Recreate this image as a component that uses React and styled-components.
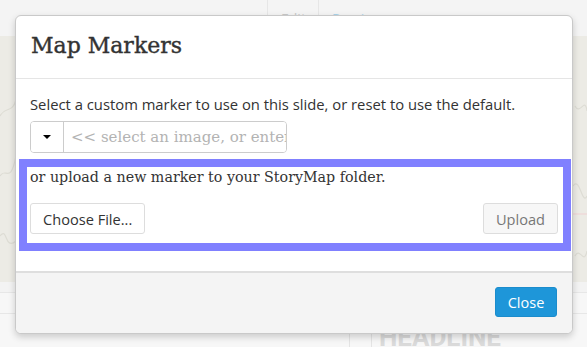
import React from "react";
import styled, { createGlobalStyle } from "styled-components";

const Global = createGlobalStyle`
  html, body { margin: 0; padding: 0; }
  body { font-family: "Open Sans", "Liberation Sans", sans-serif; }
`

const Page = styled.div`
  position: relative;
  width: 587px;
  height: 347px;
  overflow: hidden;
  background: #f6f6f6;
  display: flex;
  flex-direction: column;
`

const TopBar = styled.div`
  height: 36px;
  flex: none;
  display: flex;
  align-items: flex-start;
  padding-left: 267px;
  background: #f4f4f4;
`

const Tab = styled.div`
  height: 36px;
  padding: 9px 12px 0 13px;
  box-sizing: border-box;
  border-left: 1px solid #e6e6e6;
  font-size: 14px;
  color: ${(p) => (p.active ? "#a9d3ea" : "#c8c8c8")};
`

const MapArea = styled.div`
  height: 246px;
  flex: none;
  background: #ecebe5;
  overflow: hidden;
`

const Rows = styled.div`
  flex: 1;
  display: flex;
  flex-direction: column;
  background: #f7f7f7;
`

const Row = styled.div`
  height: ${(p) => p.h}px;
  flex: none;
  border-bottom: 1px solid #e7e7e7;
  background: ${(p) => p.bg || "#f7f7f7"};
`

const HeadlineRow = styled.div`
  flex: 1;
  display: flex;
  padding-left: 349px;
`

const Rule = styled.div`
  width: 21px;
  border-left: 1px solid #e4e4e4;
  flex: none;
`

const Headline = styled.div`
  border-left: 1px solid #e4e4e4;
  padding: 10px 0 0 7px;
  font-family: "Liberation Sans Narrow", "Roboto", sans-serif;
  font-weight: 700;
  font-size: 26px;
  line-height: 26px;
  color: #dadada;
`

const Modal = styled.div`
  position: absolute;
  left: 15px;
  top: 15px;
  width: 558px;
  height: 319px;
  box-sizing: border-box;
  background: #fff;
  border: 1px solid #c9c9c9;
  border-radius: 6px;
  box-shadow: 0 3px 7px rgba(0, 0, 0, 0.18);
  display: flex;
  flex-direction: column;
  overflow: hidden;
`

const Header = styled.div`
  height: 63px;
  flex: none;
  box-sizing: border-box;
  border-bottom: 1px solid #e5e5e5;
  padding: 15px 15px 0 15px;
`

const Title = styled.h3`
  margin: 0;
  font-family: "DejaVu Serif", "Liberation Serif", serif;
  font-weight: 400;
  font-size: 22px;
  line-height: 30px;
  color: #333;
  -webkit-text-stroke: 0.4px #333;
`

const Body = styled.div`
  flex: 1;
  padding: 15px 14px 0 14px;
`

const Lead = styled.p`
  margin: 0;
  font-size: 14.8px;
  line-height: 20px;
  color: #333;
`

const InputGroup = styled.div`
  margin-top: 7px;
  width: 257px;
  height: 32px;
  box-sizing: border-box;
  display: flex;
  border: 1px solid #ccc;
  border-radius: 4px;
  overflow: hidden;
`

const DropBtn = styled.div`
  width: 32px;
  flex: none;
  display: flex;
  align-items: center;
  justify-content: center;
  border-right: 1px solid #ccc;
  background: #fff;
`

const Caret = styled.span`
  width: 0;
  height: 0;
  border-left: 4px solid transparent;
  border-right: 4px solid transparent;
  border-top: 4px solid #000;
`

const TextInput = styled.input`
  flex: 1;
  min-width: 0;
  border: 0;
  outline: 0;
  padding: 0 0 0 7px;
  font-family: "DejaVu Serif", "Liberation Serif", serif;
  font-size: 15px;
  color: #333;
  &::placeholder { color: #b3b3b3; }
`

const Highlight = styled.div`
  margin: 6px -13px 0 -11px;
  border: 8px solid #8080ff;
  padding: 0 5px 9px 3px;
  background: #fff;
`

const UploadText = styled.p`
  margin: 0;
  font-family: "DejaVu Serif", "Liberation Serif", serif;
  font-size: 14.25px;
  line-height: 20px;
  color: #333;
`

const ButtonRow = styled.div`
  margin-top: 16px;
  display: flex;
  justify-content: space-between;
`

const Button = styled.button`
  height: 31px;
  padding: 0 12px;
  border: 1px solid #ddd;
  border-radius: 3px;
  background: ${(p) => (p.muted ? "#f7f7f7" : "#fff")};
  color: ${(p) => (p.muted ? "#777" : "#333")};
  font-family: "Open Sans", "Liberation Sans", sans-serif;
  font-size: 14.6px;
`

const Footer = styled.div`
  height: 62px;
  flex: none;
  box-sizing: border-box;
  border-top: 2px solid #dedede;
  background: #f4f4f4;
  display: flex;
  justify-content: flex-end;
  padding: 14px 15px 0 0;
`

const CloseBtn = styled.button`
  width: 62px;
  height: 30px;
  border: 1px solid #1b8ccc;
  border-radius: 3px;
  background: #1e96d9;
  color: #fff;
  font-family: "Open Sans", "Liberation Sans", sans-serif;
  font-size: 14.5px;
`

const MapLines = () => (
  <svg width="587" height="246" style={{ display: "block" }}>
    <g fill="none" stroke="#dddcd4" strokeWidth="1.2">
      <path d="M0 80 C 5 70, 12 78, 16 64" />
      <path d="M0 140 C 6 130, 10 150, 16 120" />
      <path d="M0 200 C 8 190, 4 215, 16 205" />
      <path d="M575 70 C 580 80, 585 60, 587 75" />
      <path d="M573 150 C 580 140, 582 170, 587 160" />
      <path d="M573 178 L 587 178" stroke="#f0d6d6" />
      <path d="M575 220 C 580 210, 584 230, 587 215" />
    </g>
  </svg>
)

export default function App() {
  return (
    <Page>
      <Global />
      <TopBar>
        <Tab>Edit</Tab>
        <Tab active>Preview</Tab>
      </TopBar>
      <MapArea>
        <MapLines />
      </MapArea>
      <Rows>
        <Row h={10} bg="#f3f3f3" />
        <Row h={20} />
        <HeadlineRow>
          <Rule />
          <Headline>HEADLINE</Headline>
        </HeadlineRow>
      </Rows>

      <Modal>
        <Header>
          <Title>Map Markers</Title>
        </Header>
        <Body>
          <Lead>Select a custom marker to use on this slide, or reset to use the default.</Lead>
          <InputGroup>
            <DropBtn>
              <Caret />
            </DropBtn>
            <TextInput placeholder="<< select an image, or enter a URL" />
          </InputGroup>
          <Highlight>
            <UploadText>or upload a new marker to your StoryMap folder.</UploadText>
            <ButtonRow>
              <Button>Choose File...</Button>
              <Button muted>Upload</Button>
            </ButtonRow>
          </Highlight>
        </Body>
        <Footer>
          <CloseBtn>Close</CloseBtn>
        </Footer>
      </Modal>
    </Page>
  )
}
